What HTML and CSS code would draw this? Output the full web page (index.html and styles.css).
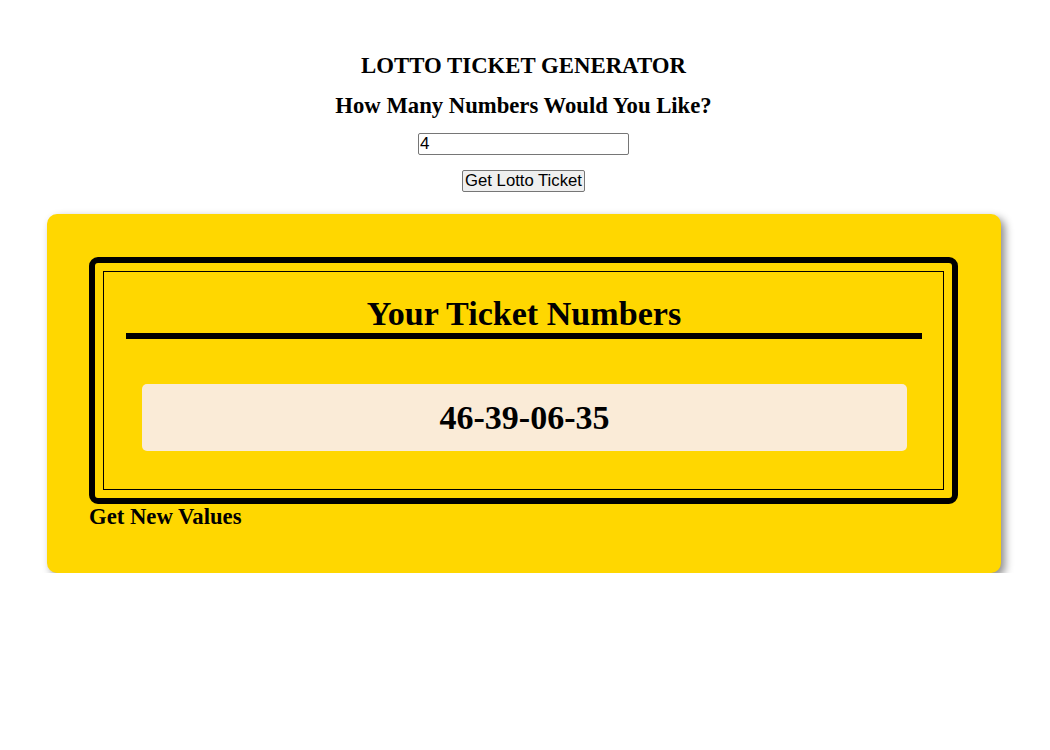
FILE: index.html
```html
<!DOCTYPE html>
<html>
<head>
<meta charset="utf-8">
<title>Lotto Ticket Generator</title>
<link rel="stylesheet" href="styles.css">
</head>
<body>
<div class="page">
  <h1 class="title">LOTTO TICKET GENERATOR</h1>
  <h2 class="question">How Many Numbers Would You Like?</h2>
  <input class="count" type="text" value="4">
  <button class="generate">Get Lotto Ticket</button>
  <section class="card">
    <div class="frame">
      <div class="inner">
        <h2 class="ticket-title">Your Ticket Numbers</h2>
        <div class="numbers">46-39-06-35</div>
      </div>
    </div>
    <h3 class="new-values">Get New Values</h3>
  </section>
</div>
</body>
</html>
```
FILE: styles.css
```css
html, body {
  margin: 0;
  padding: 0;
  background: #ffffff;
}
.page {
  display: flex;
  flex-direction: column;
  align-items: center;
  font-family: "Liberation Serif", "Times New Roman", serif;
  color: #000;
  padding: 53px 3px 0 0;
}
.title {
  margin: 0;
  font-size: 22.8px;
  line-height: 26px;
  font-weight: bold;
}
.question {
  margin: 14px 0 0;
  font-size: 22.7px;
  line-height: 26px;
  font-weight: bold;
}
.count {
  margin: 14px 0 0;
  box-sizing: border-box;
  width: 211px;
  height: 22px;
  padding: 0 1px;
  font-family: "Liberation Sans", Arial, sans-serif;
  font-size: 17px;
  color: #000;
  border: 1px solid #767676;
  border-radius: 2px;
  background: #fff;
}
.generate {
  margin: 15px 0 0;
  box-sizing: border-box;
  height: 22px;
  padding: 0 2px;
  font-family: "Liberation Sans", Arial, sans-serif;
  font-size: 16.7px;
  line-height: 18px;
  color: #000;
  background: #efefef;
  border: 1px solid #767676;
  border-radius: 2px;
}
.card {
  box-sizing: border-box;
  align-self: stretch;
  margin: 22px 46px 0 47px;
  padding: 43px 43px 43px 42px;
  background: #ffd700;
  border-radius: 10px;
  box-shadow: 4px 4px 8px rgba(0, 0, 0, 0.45);
}
.frame {
  border: 6px solid #000;
  border-radius: 9px;
  padding: 8px;
}
.inner {
  border: 1px solid #000;
  padding: 23px 0 38px;
  display: flex;
  flex-direction: column;
}
.ticket-title {
  margin: 0 21px 0 22px;
  font-size: 34.1px;
  line-height: 38px;
  font-weight: bold;
  text-align: center;
  border-bottom: 6px solid #000;
}
.numbers {
  margin: 45px 36px 0 38px;
  height: 67px;
  background: #faebd7;
  border-radius: 5px;
  display: flex;
  align-items: center;
  justify-content: center;
  font-size: 34px;
  font-weight: bold;
}
.new-values {
  margin: 0;
  font-size: 22.7px;
  line-height: 26px;
  font-weight: bold;
}
```
